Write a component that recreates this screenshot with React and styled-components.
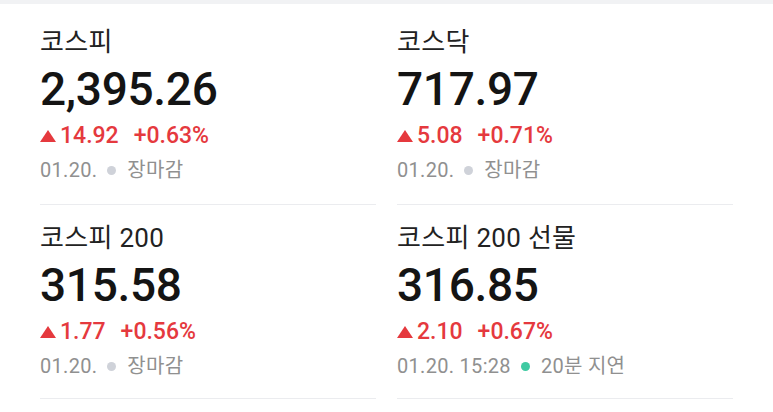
import styled, { createGlobalStyle } from 'styled-components';

const GlobalStyle = createGlobalStyle`
  html, body {
    margin: 0;
    padding: 0;
    background: #ffffff;
  }
  body {
    font-family: Roboto, "Noto Sans CJK KR", sans-serif;
  }
`;

const Page = styled.div`
  width: 773px;
  height: 412px;
  background: #ffffff;
  overflow: hidden;
`;

const TopBand = styled.div`
  height: 4px;
  background: #f1f2f4;
`;

const Grid = styled.div`
  display: grid;
  grid-template-columns: 1fr 1fr;
  column-gap: 21px;
  padding: 0 40px;
`;

const Cell = styled.div`
  display: flex;
  flex-direction: column;
  align-items: flex-start;
  padding: 18px 0 20px;
  border-bottom: 1px solid #ebecef;

  &:nth-child(-n + 2) {
    padding-top: 23px;
    padding-bottom: 22px;
  }
`;

const Title = styled.div`
  font-size: 26px;
  line-height: 30px;
  color: #222222;
  letter-spacing: 0.3px;
`;

const Price = styled.div`
  margin-top: 5px;
  font-size: 46px;
  line-height: 54px;
  font-weight: 500;
  color: #141414;
  letter-spacing: -0.3px;
`;

const ChangeRow = styled.div`
  margin-top: 7px;
  display: flex;
  align-items: center;
  height: 26px;
  font-size: 23px;
  line-height: 26px;
  font-weight: 500;
  color: ${p => (p.$up ? '#e5393e' : '#2f6fe4')};
`;

const Arrow = styled.svg`
  width: 16px;
  height: 12px;
  margin-right: 4px;
  fill: currentColor;
`;

const Rate = styled.span`
  margin-left: 15px;
`;

const MetaRow = styled.div`
  margin-top: 9px;
  display: flex;
  align-items: center;
  font-size: 20px;
  line-height: 24px;
  color: #909090;
  letter-spacing: 0.3px;
`;

const Dot = styled.span`
  width: 9px;
  height: 9px;
  border-radius: 50%;
  margin: 0 11px 0 10px;
  background: ${p => (p.$live ? '#3fcaa2' : '#cfd2d9')};
`;

const indices = [
  { name: '코스피', price: '2,395.26', diff: '14.92', rate: '+0.63%', time: '01.20.', status: '장마감' },
  { name: '코스닥', price: '717.97', diff: '5.08', rate: '+0.71%', time: '01.20.', status: '장마감' },
  { name: '코스피 200', price: '315.58', diff: '1.77', rate: '+0.56%', time: '01.20.', status: '장마감' },
  { name: '코스피 200 선물', price: '316.85', diff: '2.10', rate: '+0.67%', time: '01.20. 15:28', status: '20분 지연', live: true },
];

const App = () => {
  return (
    <Page>
      <GlobalStyle />
      <TopBand />
      <Grid>
        {indices.map(item => (
          <Cell key={item.name}>
            <Title>{item.name}</Title>
            <Price>{item.price}</Price>
            <ChangeRow $up>
              <Arrow viewBox="0 0 16 12">
                <path d="M8 0 L16 12 L0 12 Z" />
              </Arrow>
              <span>{item.diff}</span>
              <Rate>{item.rate}</Rate>
            </ChangeRow>
            <MetaRow>
              <span>{item.time}</span>
              <Dot $live={item.live} />
              <span>{item.status}</span>
            </MetaRow>
          </Cell>
        ))}
      </Grid>
    </Page>
  );
};

export default App;
